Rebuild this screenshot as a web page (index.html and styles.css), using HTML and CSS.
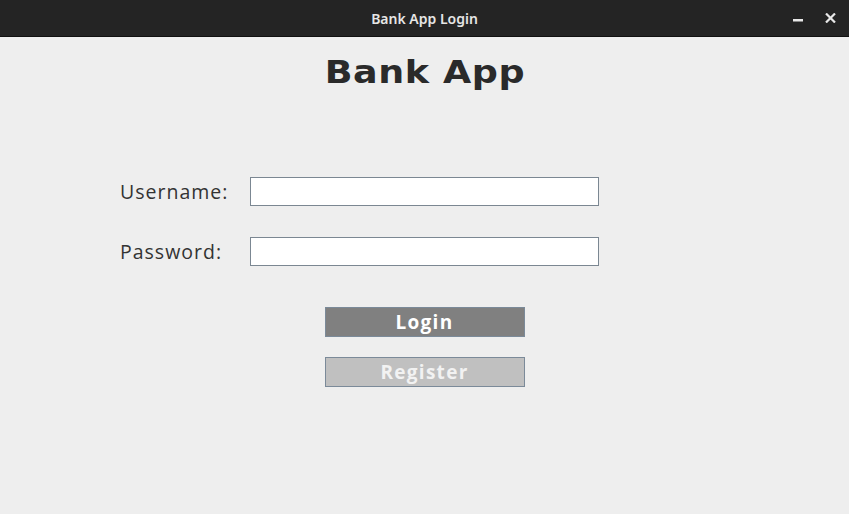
FILE: index.html
```
<!DOCTYPE html>
<html>
<head>
<meta charset="utf-8">
<link rel="stylesheet" href="styles.css">
</head>
<body>
<div class="titlebar">
  <span class="wtitle">Bank App Login</span>
  <div class="wbtns">
    <svg class="wbtn" width="10" height="10" viewBox="0 0 10 10"><rect x="0" y="6" width="10" height="2.5" fill="#e8e8e8"/></svg>
    <svg class="wbtn" width="11" height="10" viewBox="0 0 11 10"><path d="M1 0.5 L10 9.5 M10 0.5 L1 9.5" stroke="#e8e8e8" stroke-width="2.2"/></svg>
  </div>
</div>
<main class="content">
  <h1 class="apptitle">Bank App</h1>
  <div class="form">
    <div class="row"><label class="lbl">Username:</label><input class="field" type="text"></div>
    <div class="row"><label class="lbl">Password:</label><input class="field" type="password"></div>
  </div>
  <div class="buttons">
    <button class="btn login">Login</button>
    <button class="btn register">Register</button>
  </div>
</main>
</body>
</html>
```
FILE: styles.css
```
* { box-sizing: border-box; }
html, body { margin: 0; padding: 0; }
body {
  width: 849px; height: 514px; overflow: hidden;
  background: #eeeeee;
  font-family: "Open Sans", "DejaVu Sans", sans-serif;
}
.titlebar {
  height: 37px;
  background: #242424;
  border-bottom: 1px solid #111;
  display: flex; align-items: center; justify-content: center;
  position: relative;
}
.wtitle {
  color: #e6e6e6;
  font-family: "Noto Sans", sans-serif;
  font-weight: 600;
  font-size: 14px;
}
.wbtns {
  position: absolute; right: 13px; top: 13px;
  display: flex; gap: 22px;
}
.wbtn { display: block; }
.content {
  display: flex; flex-direction: column; align-items: center;
}
.apptitle {
  margin: 15px 0 0 0;
  font-family: "DejaVu Sans", sans-serif;
  font-weight: bold;
  font-size: 32px;
  letter-spacing: 0.5px;
  line-height: 40px;
  color: #2a2a2a;
  transform: scaleX(1.14);
}
.form {
  align-self: flex-start;
  margin-top: 85px;
  margin-left: 120px;
  display: flex; flex-direction: column; gap: 31px;
}
.row { display: flex; align-items: center; }
.lbl {
  width: 130px;
  font-size: 19.5px;
  color: #333;
  font-family: "Open Sans", sans-serif;
  letter-spacing: 1px;
}
.field {
  width: 349px; height: 29px;
  border: 1px solid #7b8792;
  background: #fff;
  margin: 0; padding: 0 4px;
  outline: none;
}
.buttons {
  margin-top: 41px;
  display: flex; flex-direction: column; gap: 20px;
}
.btn {
  width: 200px; height: 30px;
  border: 1px solid #7b8a99;
  font-family: "Open Sans", sans-serif;
  font-weight: bold;
  font-size: 19px;
  letter-spacing: 1.3px;
  padding: 0;
  line-height: 26px;
}
.login { background: #808080; color: #fff; }
.register { background: #c0c0c0; color: #f2f2f2; }
```
